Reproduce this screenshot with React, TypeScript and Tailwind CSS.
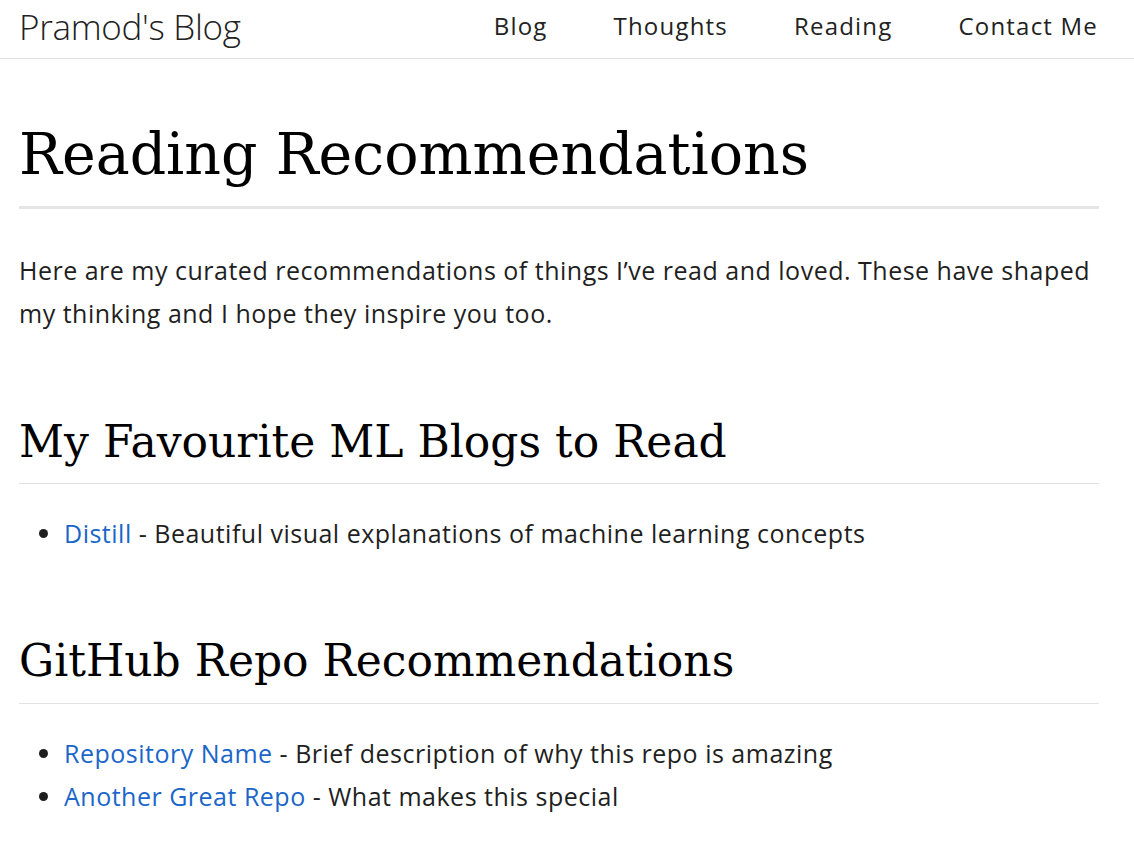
import React from "react";

export default function App() {
  return (
    <div className="min-h-screen bg-white text-[#1f1f1f] font-['Open_Sans','Noto_Sans',sans-serif]">
      <header className="h-[59px] pb-[6px] border-b border-[#e2e2e2] flex items-center justify-between pl-[19px] pr-[36px]">
        <div className="text-[35px] font-light text-[#222] leading-none tracking-[-0.3px]">Pramod's Blog</div>
        <nav className="flex items-center gap-[66px] text-[24px] text-[#222] leading-none tracking-[1.2px]">
          <a>Blog</a>
          <a>Thoughts</a>
          <a>Reading</a>
          <a>Contact Me</a>
        </nav>
      </header>
      <main className="pl-[19px] w-[1099px]">
        <h1 className="font-['DejaVu_Serif','Liberation_Serif',serif] text-[57px] leading-none text-black pt-[67px] pb-[23px] border-b-[3px] border-[#e5e5e5]">
          Reading Recommendations
        </h1>
        <p className="mt-[40px] text-[25px] leading-[43px] tracking-[0.5px]">
          Here are my curated recommendations of things I’ve read and loved. These have shaped my thinking and I hope they inspire you too.
        </p>
        <h2 className="font-['DejaVu_Serif','Liberation_Serif',serif] text-[44px] leading-none text-black mt-[85px] pb-[19px] border-b border-[#e2e2e2]">
          My Favourite ML Blogs to Read
        </h2>
        <ul className="list-disc pl-[45px] mt-[28px] text-[25px] leading-[43px] tracking-[0.5px]">
          <li>
            <a className="text-[#1a66c9]">Distill</a> - Beautiful visual explanations of machine learning concepts
          </li>
        </ul>
        <h2 className="font-['DejaVu_Serif','Liberation_Serif',serif] text-[44px] leading-none text-black mt-[84px] pb-[20px] border-b border-[#e2e2e2]">
          GitHub Repo Recommendations
        </h2>
        <ul className="list-disc pl-[45px] mt-[28px] text-[25px] leading-[43px] tracking-[0.5px]">
          <li>
            <a className="text-[#1a66c9]">Repository Name</a> - Brief description of why this repo is amazing
          </li>
          <li>
            <a className="text-[#1a66c9]">Another Great Repo</a> - What makes this special
          </li>
        </ul>
      </main>
    </div>
  );
}
